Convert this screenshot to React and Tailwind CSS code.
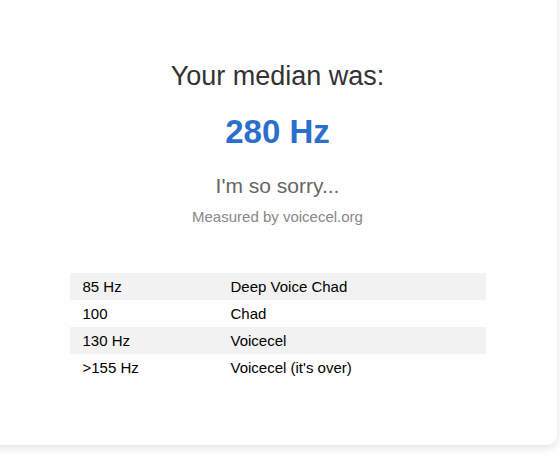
import React from "react";

const rows = [
    { hz: "85 Hz", label: "Deep Voice Chad" },
    { hz: "100", label: "Chad" },
    { hz: "130 Hz", label: "Voicecel" },
    { hz: ">155 Hz", label: "Voicecel (it's over)" },
];

function App() {
    return (
        <div className="min-h-[458px] w-[560px] overflow-hidden bg-white font-['Liberation_Sans',Arial,sans-serif]">
            <div className="-ml-[13px] -mt-[10px] w-[570px] rounded-[10px] bg-[#fefefe] pl-[13px] pt-[71px] pb-[64px] shadow-[0_3px_10px_rgba(0,0,0,0.12)]">
                <div className="flex w-[555px] flex-col items-center">
                    <h1 className="text-[27px] leading-[31px] text-[#333]">Your median was:</h1>
                    <div className="mt-[21px] text-[33px] font-bold leading-[38px] text-[#2c6ecb]">280 Hz</div>
                    <div className="mt-[22px] text-[21px] leading-[25px] text-[#666]">I'm so sorry...</div>
                    <div className="mt-[10px] text-[15px] leading-[18px] text-[#888]">Measured by voicecel.org</div>
                    <div className="mt-[47px] w-[416px]">
                        {rows.map((row, index) => (
                            <div
                                key={index}
                                className={`grid h-[27px] grid-cols-[148px_1fr] items-center text-[15px] leading-[18px] text-black ${index % 2 === 0 ? "bg-[#f2f2f2]" : "bg-transparent"}`}
                            >
                                <span className="pl-[13px]">{row.hz}</span>
                                <span className="pl-[13px]">{row.label}</span>
                            </div>
                        ))}
                    </div>
                </div>
            </div>
        </div>
    );
}

export default App;
